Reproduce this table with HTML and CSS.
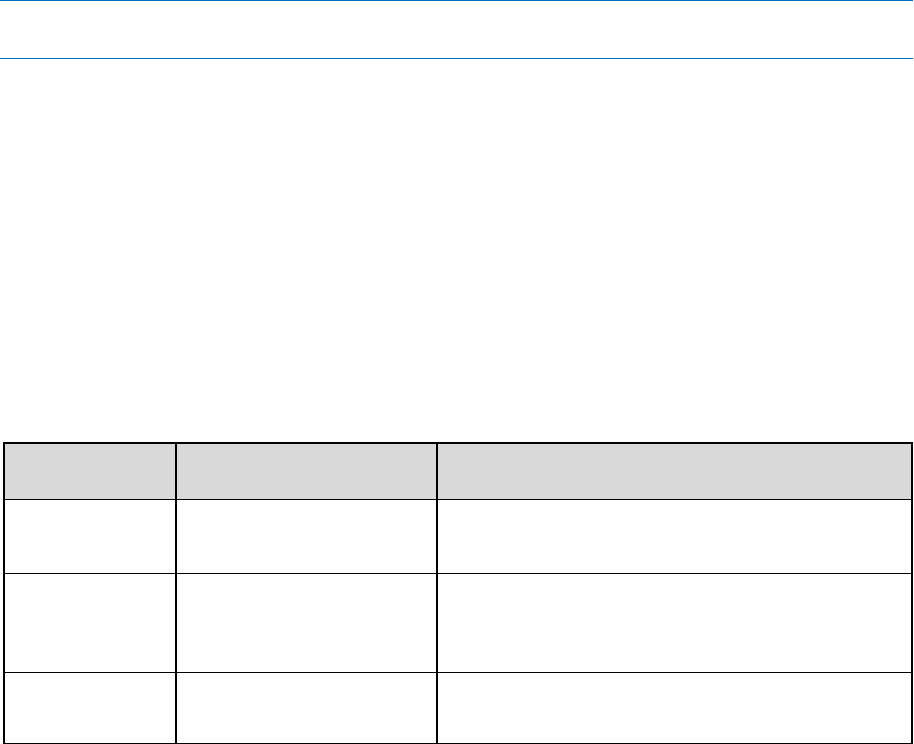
FILE: index.html
```html
<!DOCTYPE html>
<html lang="en">
<head>
    <meta charset="UTF-8">
    <meta name="viewport" content="width=device-width, initial-scale=1.0">
    <title>Document</title>
    <link rel="stylesheet" href="styles.css">
</head>
<body>
<div class="page-header"></div>
<div class="page-body">
    <table class="doc-table">
        <colgroup>
            <col class="col-a">
            <col class="col-b">
            <col class="col-c">
        </colgroup>
        <thead>
            <tr class="row-head"><th></th><th></th><th></th></tr>
        </thead>
        <tbody>
            <tr class="row-1"><td></td><td></td><td></td></tr>
            <tr class="row-2"><td></td><td></td><td></td></tr>
            <tr class="row-3"><td></td><td></td><td></td></tr>
        </tbody>
    </table>
</div>
</body>
</html>
```

FILE: styles.css
```css
body { margin: 0; background: #fff; font-family: "Liberation Sans", Arial, sans-serif; }
.page-header {
    width: 913px; height: 57px;
    border-top: 1px solid #0070c0; border-bottom: 1px solid #0070c0;
}
.page-body { padding: 383px 0 0 3px; }
.doc-table { border-collapse: collapse; table-layout: fixed; width: 910px; border: 2px solid #000; }
.doc-table col.col-a { width: 172px; }
.doc-table col.col-b { width: 261px; }
.doc-table th, .doc-table td { border: 1px solid #000; border-left-width: 2px; border-right-width: 2px; padding: 0; }
.doc-table th { background: #d9d9d9; }
.row-head { height: 56px; }
.row-1 { height: 74px; }
.row-2 { height: 99px; }
.row-3 { height: 72px; }
```
